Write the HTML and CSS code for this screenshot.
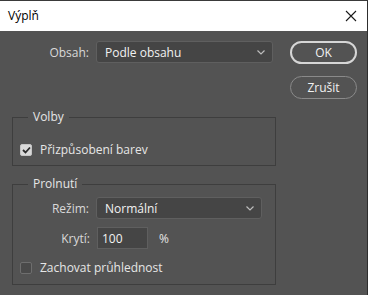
FILE: index.html
```html
<!DOCTYPE html>
<html lang="cs">
<head>
    <meta charset="UTF-8">
    <title>Výplň</title>
    <link rel="stylesheet" href="styles.css">
</head>
<body>
    <div class="window">
        <div class="titlebar">
            <span class="title">Výplň</span>
            <svg class="close" width="12" height="12" viewBox="0 0 12 12" aria-label="Zavřít">
                <path d="M1 1 L11 11 M11 1 L1 11" stroke="#1a1a1a" stroke-width="1.1" fill="none"/>
            </svg>
        </div>

        <div class="content">
            <div class="main">
                <div class="row row-top">
                    <label class="label">Obsah:</label>
                    <div class="select select-wide">
                        <span>Podle obsahu</span>
                        <svg class="chevron" width="8" height="5" viewBox="0 0 8 5"><path d="M0.5 0.5 L4 4 L7.5 0.5" stroke="#bdbdbd" stroke-width="1.2" fill="none"/></svg>
                    </div>
                </div>

                <fieldset class="group group-volby">
                    <legend>Volby</legend>
                    <div class="check-row">
                        <span class="checkbox checked">
                            <svg width="9" height="8" viewBox="0 0 9 8"><path d="M1 4 L3.5 6.5 L8 1.5" stroke="#2b2b2b" stroke-width="1.8" fill="none"/></svg>
                        </span>
                        <span>Přizpůsobení barev</span>
                    </div>
                </fieldset>

                <fieldset class="group group-prolnuti">
                    <legend>Prolnutí</legend>
                    <div class="row">
                        <label class="label">Režim:</label>
                        <div class="select select-mode">
                            <span>Normální</span>
                            <svg class="chevron" width="8" height="5" viewBox="0 0 8 5"><path d="M0.5 0.5 L4 4 L7.5 0.5" stroke="#bdbdbd" stroke-width="1.2" fill="none"/></svg>
                        </div>
                    </div>
                    <div class="row row-opacity">
                        <label class="label">Krytí:</label>
                        <div class="field">100</div>
                        <span class="unit">%</span>
                    </div>
                    <div class="check-row check-last">
                        <span class="checkbox"></span>
                        <span>Zachovat průhlednost</span>
                    </div>
                </fieldset>
            </div>

            <div class="buttons">
                <button class="btn btn-ok">OK</button>
                <button class="btn">Zrušit</button>
            </div>
        </div>
    </div>
</body>
</html>
```

FILE: styles.css
```css
html, body {
    margin: 0;
    padding: 0;
    background: #535353;
}

body {
    font-family: "Open Sans", "Noto Sans", sans-serif;
    font-size: 12px;
    color: #e6e6e6;
}

.window {
    width: 367px;
    height: 294px;
    border-top: 1px solid #3a3a3a;
    border-right: 1px solid #2e2e2e;
    background: #535353;
}

.titlebar {
    height: 30px;
    background: #ffffff;
    display: flex;
    align-items: center;
    justify-content: space-between;
    padding: 0 9px 0 8px;
}

.title {
    color: #000000;
    font-size: 12px;
    margin-top: -1px;
}

.close {
    margin-right: 1px;
}

.content {
    display: flex;
    padding: 10px 0 0 12px;
}

.main {
    width: 264px;
}

.row {
    display: flex;
    align-items: center;
}

.label {
    width: 83px;
    text-align: right;
    color: #d9d9d9;
    padding-right: 7px;
    box-sizing: border-box;
}

.row-top .label {
    width: 84px;
}

.select {
    height: 22px;
    box-sizing: border-box;
    background: #454545;
    border: 1px solid #5f5f5f;
    border-radius: 3px;
    display: flex;
    align-items: center;
    justify-content: space-between;
    padding: 0 7px 0 8px;
    color: #f2f2f2;
}

.select-wide {
    width: 177px;
}

.select-mode {
    width: 166px;
}

.chevron {
    margin-top: 1px;
}

.group {
    margin: 0;
    padding: 0;
    border: 1px solid #3e3e3e;
    min-width: 0;
}

.group legend {
    margin-left: 15px;
    padding: 0 5px;
    color: #e6e6e6;
    line-height: 16px;
}

.group-volby {
    margin-top: 46px;
    height: 57px;
    box-sizing: border-box;
}

.group-prolnuti {
    margin-top: 10px;
    height: 109px;
    box-sizing: border-box;
    padding-top: 5px;
}

.check-row {
    display: flex;
    align-items: center;
    gap: 8px;
    padding-left: 7px;
    margin-top: 16px;
}

.check-last {
    margin-top: 10px;
}

.checkbox {
    width: 12px;
    height: 12px;
    box-sizing: border-box;
    border: 1px solid #6e6e6e;
    border-radius: 2px;
    background: #4a4a4a;
    display: flex;
    align-items: center;
    justify-content: center;
}

.checkbox.checked {
    background: #d9d9d9;
    border-color: #c4c4c4;
}

.row-opacity {
    margin-top: 8px;
}

.row-opacity .label {
    width: 84px;
}

.field {
    width: 51px;
    height: 22px;
    box-sizing: border-box;
    background: #454545;
    border: 1px solid #5f5f5f;
    padding: 0 4px;
    display: flex;
    align-items: center;
    color: #f2f2f2;
}

.unit {
    margin-left: 11px;
}

.buttons {
    display: flex;
    flex-direction: column;
    gap: 12px;
    margin-left: 14px;
}

.btn {
    width: 67px;
    height: 23px;
    border-radius: 12px;
    border: 1px solid #8a8a8a;
    background: #535353;
    color: #f2f2f2;
    font-family: inherit;
    font-size: 12px;
    padding: 0;
}

.btn-ok {
    border: 2px solid #d6d6d6;
}
```
